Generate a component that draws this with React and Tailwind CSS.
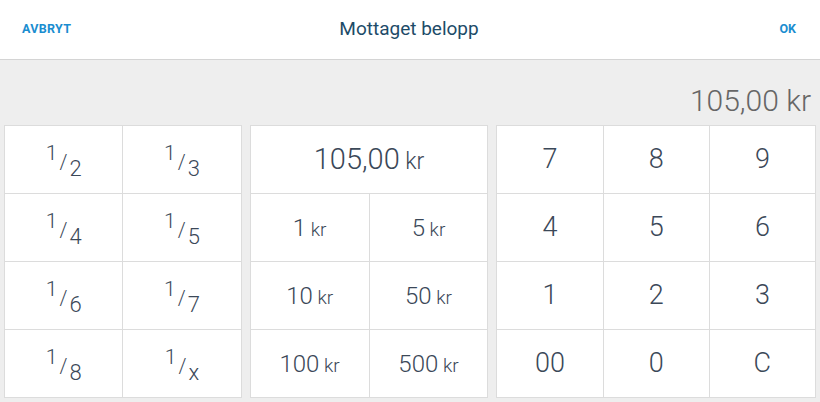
import React from "react";

const fractions = ["2", "3", "4", "5", "6", "7", "8", "x"];
const coins = ["1", "5", "10", "50", "100", "500"];
const keys = ["7", "8", "9", "4", "5", "6", "1", "2", "3", "00", "0", "C"];

function Cell({ children, className = "" }) {
  return (
    <button
      className={`flex h-[68px] items-center justify-center border-r border-b border-[#dcdcdc] bg-white text-[#3b4858] ${className}`}
    >
      {children}
    </button>
  );
}

function Fraction({ denom }) {
  return (
    <span className="flex items-center text-[21px] font-light leading-none">
      <span className="-translate-y-[6px]">1</span>
      <span className="translate-y-[2px] px-[2px] text-[20px]">/</span>
      <span className="translate-y-[9px] text-[22px]">{denom}</span>
    </span>
  );
}

function Amount({ value, big }) {
  return (
    <span className="font-light leading-none">
      <span className={big ? "text-[29px]" : "text-[24px]"}>{value}</span>
      <span className={big ? "text-[23px]" : "text-[19px]"}> kr</span>
    </span>
  );
}

export default function App() {
  return (
    <div className="flex h-[402px] w-[820px] flex-col bg-[#eeeeee] font-['Roboto',sans-serif]">
      <header className="flex h-[60px] items-center border-b border-[#d4d4d4] bg-white px-[22px]">
        <button className="flex-1 text-left text-[12.5px] font-bold tracking-wide text-[#1a8dd0]">AVBRYT</button>
        <h1 className="text-[19px] text-[#1d4b68]">Mottaget belopp</h1>
        <button className="flex-1 pr-[2px] text-right text-[12.5px] font-bold text-[#1a8dd0]">OK</button>
      </header>

      <div className="flex h-[65px] items-center justify-end pr-[9px] pt-[16px]">
        <span className="text-[30px] font-light text-[#666666]">105,00 kr</span>
      </div>

      <div className="flex gap-[8px] px-[4px]">
        <div className="grid w-[238px] grid-cols-2 border-t border-l border-[#dcdcdc]">
          {fractions.map((d) => (
            <Cell key={d}>
              <Fraction denom={d} />
            </Cell>
          ))}
        </div>

        <div className="grid w-[239px] grid-cols-2 border-t border-l border-[#dcdcdc]">
          <Cell className="col-span-2">
            <Amount value="105,00" big />
          </Cell>
          {coins.map((c) => (
            <Cell key={c}>
              <Amount value={c} />
            </Cell>
          ))}
        </div>

        <div className="grid w-[320px] grid-cols-3 border-t border-l border-[#dcdcdc]">
          {keys.map((k) => (
            <Cell key={k}>
              <span className="text-[27px] font-light leading-none">{k}</span>
            </Cell>
          ))}
        </div>
      </div>
    </div>
  );
}
